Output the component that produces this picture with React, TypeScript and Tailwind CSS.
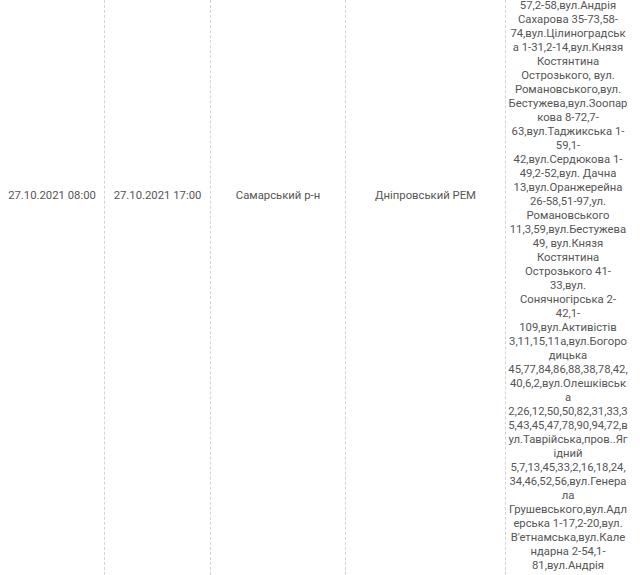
const addressLines = [
  "57,2-58,вул.Андрія",
  "Сахарова 35-73,58-",
  "74,вул.Цілиноградськ",
  "а 1-31,2-14,вул.Князя",
  "Костянтина",
  "Острозького, вул.",
  "Романовського,вул.",
  "Бестужева,вул.Зоопар",
  "кова 8-72,7-",
  "63,вул.Таджикська 1-",
  "59,1-",
  "42,вул.Сердюкова 1-",
  "49,2-52,вул. Дачна",
  "13,вул.Оранжерейна",
  "26-58,51-97,ул.",
  "Романовського",
  "11,3,59,вул.Бестужева",
  "49, вул.Князя",
  "Костянтина",
  "Острозького 41-",
  "33,вул.",
  "Сонячногірська 2-",
  "42,1-",
  "109,вул.Активістів",
  "3,11,15,11а,вул.Богоро",
  "дицька",
  "45,77,84,86,88,38,78,42,",
  "40,6,2,вул.Олешківськ",
  "а",
  "2,26,12,50,50,82,31,33,3",
  "5,43,45,47,78,90,94,72,в",
  "ул.Таврійська,пров..Яг",
  "ідний",
  "5,7,13,45,33,2,16,18,24,",
  "34,46,52,56,вул.Генера",
  "ла",
  "Грушевського,вул.Адл",
  "ерська 1-17,2-20,вул.",
  "В'етнамська,вул.Кале",
  "ндарна 2-54,1-",
  "81,вул.Андрія",
];

const cells = [
  { text: "27.10.2021 08:00", width: "w-[105px]" },
  { text: "27.10.2021 17:00", width: "w-[106px]" },
  { text: "Самарський р-н", width: "w-[135px]" },
  { text: "Дніпровський РЕМ", width: "w-[160px]" },
];

export default function App() {
  return (
    <div className="h-[575px] w-[640px] overflow-hidden bg-white font-['Roboto',sans-serif] text-[11.3px] leading-[14px] text-[#555]">
      <div className="flex h-full">
        {cells.map((cell) => (
          <div
            key={cell.text}
            className={
              cell.width +
              " shrink-0 border-r border-dashed border-[#d4d4d4] pt-[189px] text-center whitespace-nowrap"
            }
          >
            {cell.text}
          </div>
        ))}
        <div className="w-[124px] shrink-0 -mt-[1px] text-center">
          {addressLines.map((line, i) => (
            <div key={i}>{line}</div>
          ))}
        </div>
      </div>
    </div>
  );
}
